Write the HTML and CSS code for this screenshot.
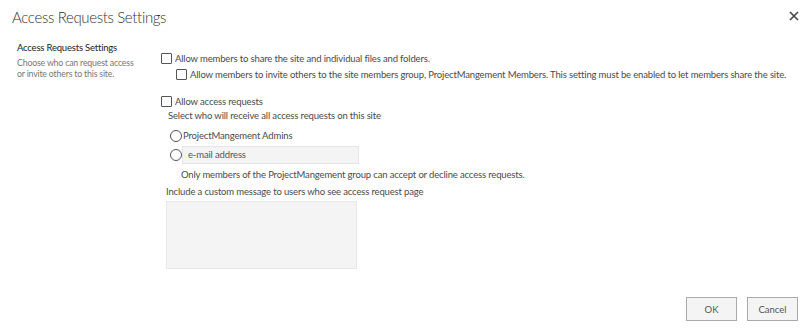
FILE: index.html
```html
<!DOCTYPE html>
<html>
<head>
<meta charset="utf-8">
<link rel="stylesheet" href="styles.css">
</head>
<body>
<div class="dialog">
  <div class="header">
    <h1 class="title">Access Requests Settings</h1>
    <span class="close" aria-label="Close">
      <svg width="10" height="10" viewBox="0 0 10 10"><path d="M1 1L9 9M9 1L1 9" stroke="#444" stroke-width="1.6"/></svg>
    </span>
  </div>
  <div class="body">
    <div class="side">
      <div class="side-title">Access Requests Settings</div>
      <div class="side-desc">Choose who can request access<br>or invite others to this site.</div>
    </div>
    <div class="main">
      <label class="row"><span class="cb"></span>Allow members to share the site and individual files and folders.</label>
      <label class="row indent"><span class="cb"></span>Allow members to invite others to the site members group, ProjectMangement Members. This setting must be enabled to let members share the site.</label>
      <label class="row gap"><span class="cb"></span>Allow access requests</label>
      <div class="sub">Select who will receive all access requests on this site</div>
      <label class="row radio-row"><span class="rb"></span>ProjectMangement Admins</label>
      <div class="row radio-row r2"><span class="rb"></span><span class="textbox">e-mail address</span></div>
      <div class="note">Only members of the ProjectMangement group can accept or decline access requests.</div>
      <div class="msg-label">Include a custom message to users who see access request page</div>
      <div class="textarea"></div>
    </div>
  </div>
  <div class="footer">
    <button class="btn">OK</button>
    <button class="btn">Cancel</button>
  </div>
</div>
</body>
</html>
```
FILE: styles.css
```css
html, body { margin: 0; padding: 0; background: #fff; }
body {
  font-family: Lato, "Open Sans", sans-serif;
  font-size: 9.5px;
  letter-spacing: -0.15px;
  color: #4a4a4a;
  width: 810px;
  height: 329px;
  overflow: hidden;
}
.dialog { position: relative; height: 329px; }
.header {
  display: flex;
  justify-content: space-between;
  align-items: flex-start;
  padding: 5px 11px 0 12px;
  height: 33px;
}
.title {
  margin: 0;
  font-size: 15px;
  font-weight: 300;
  letter-spacing: -0.35px;
  color: #333;
  line-height: 24px;
}
.close { display: block; margin-top: 6px; }
.body { display: flex; padding-top: 3px; }
.side { width: 144px; flex-shrink: 0; padding-left: 17px; }
.side-title { color: #222; font-size: 9.5px; letter-spacing: -0.2px; line-height: 14px; }
.side-desc { color: #777; font-size: 8.8px; letter-spacing: -0.2px; line-height: 11px; margin-top: 2px; }
.main { padding-top: 10px; flex: 1; }
.row { display: flex; align-items: center; line-height: 15px; white-space: nowrap; }
.row.indent { padding-left: 15px; margin-top: 1px; }
.row.gap { margin-top: 12px; }
.cb {
  display: inline-block;
  width: 9px; height: 9px;
  border: 1px solid #555;
  border-radius: 1px;
  margin-right: 3px;
  background: #fff;
}
.sub { padding-left: 7px; line-height: 14px; }
.radio-row { padding-left: 9px; margin-top: 5px; }
.rb {
  display: inline-block;
  width: 10px; height: 10px;
  border: 1px solid #555;
  border-radius: 50%;
  margin-right: 1px;
}
.r2 { margin-top: 3px; }
.r2 .rb { margin-right: 0; }
.textbox {
  display: block;
  width: 170px;
  height: 16px;
  line-height: 16px;
  padding-left: 5px;
  background: #f4f4f4;
  border: 1px solid #e6e6e6;
  color: #555;
}
.note { padding-left: 20px; margin-top: 3px; line-height: 15px; }
.msg-label { padding-left: 5px; margin-top: 2px; line-height: 15px; }
.textarea {
  margin-left: 5px;
  margin-top: 2px;
  width: 189px;
  height: 66px;
  background: #f4f4f4;
  border: 1px solid #e8e8e8;
}
.footer {
  position: absolute;
  right: 12px;
  bottom: 8px;
  display: flex;
  gap: 10px;
}
.btn {
  width: 51px;
  height: 24px;
  background: #f4f4f4;
  border: 1px solid #aaa;
  font-family: inherit;
  font-size: 9.5px;
  color: #555;
  padding: 0;
}
```
